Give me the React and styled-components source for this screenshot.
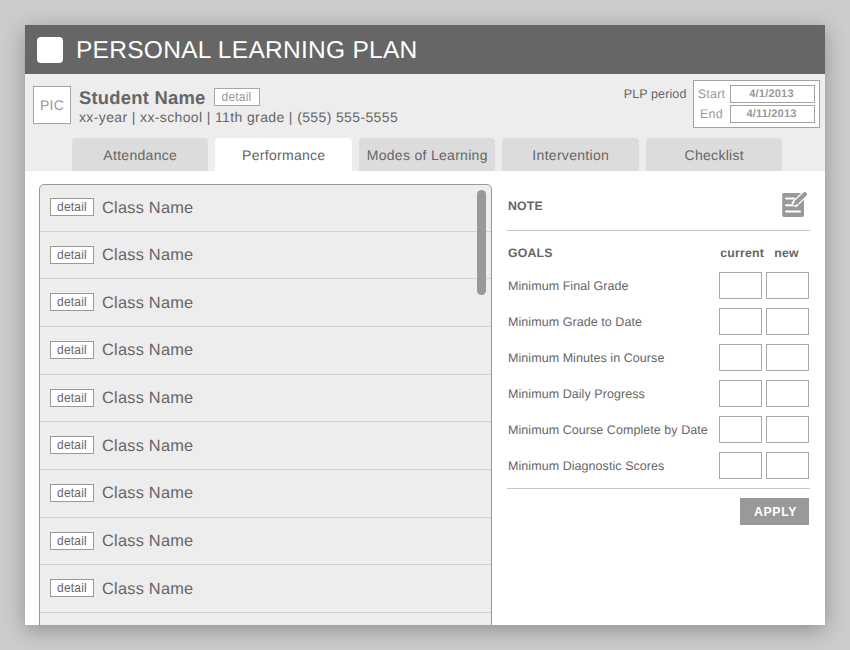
import React from "react";
import styled, { createGlobalStyle } from "styled-components";

const GlobalStyle = createGlobalStyle`
  *, *::before, *::after { box-sizing: border-box; }
  html, body { margin: 0; padding: 0; }
  body {
    background: #cccccc;
    font-family: "Liberation Sans", Arial, sans-serif;
    color: #666;
    overflow: hidden;
    text-rendering: geometricPrecision;
  }
`;

const Page = styled.div`
  width: 850px;
  height: 650px;
  padding: 25px;
  overflow: hidden;
`;

const Window = styled.div`
  width: 800px;
  height: 600px;
  display: flex;
  flex-direction: column;
  background: #fff;
  box-shadow: 0 5px 20px rgba(0, 0, 0, 0.3);
`;

const TitleBar = styled.header`
  height: 49px;
  flex: none;
  display: flex;
  align-items: center;
  gap: 13px;
  padding-left: 12px;
  background: #666;
`;

const Logo = styled.div`
  width: 26px;
  height: 26px;
  border-radius: 4px;
  background: #fff;
`;

const Title = styled.h1`
  margin: 2px 0 0;
  font-size: 24.5px;
  font-weight: 400;
  line-height: 28px;
  letter-spacing: 0.28px;
  color: #fff;
  white-space: nowrap;
`;

const SubHeader = styled.section`
  height: 97px;
  flex: none;
  display: flex;
  flex-direction: column;
  justify-content: space-between;
  background: #ededed;
`;

const Profile = styled.div`
  display: flex;
  align-items: flex-start;
  padding: 6px 5px 0 8px;
`;

const Picture = styled.div`
  width: 38px;
  height: 38px;
  margin-top: 6px;
  display: flex;
  align-items: center;
  justify-content: center;
  border: 1px solid #a3a3a3;
  background: #fff;
  font-size: 14px;
  letter-spacing: 0.2px;
  color: #999;
`;

const Student = styled.div`
  margin: 7px 0 0 8px;
  flex: 1;
`;

const NameLine = styled.div`
  display: flex;
  align-items: center;
  gap: 8px;
  height: 20px;
`;

const StudentName = styled.h2`
  margin: 1px 0 0;
  font-size: 18.4px;
  line-height: 20px;
  letter-spacing: 0.24px;
`;

const StudentInfo = styled.div`
  font-size: 14px;
  line-height: 20px;
  letter-spacing: 0.37px;
  white-space: nowrap;
`;

const DetailButton = styled.button`
  width: ${(p) => (p.$muted ? 46 : 44)}px;
  height: 18px;
  padding: 0;
  flex: none;
  border: 1px solid ${(p) => (p.$muted ? "#a8a8a8" : "#999")};
  background: #fff;
  font: 12px/16px "Liberation Sans", Arial, sans-serif;
  letter-spacing: 0.2px;
  color: ${(p) => (p.$muted ? "#999" : "#666")};
`;

const PeriodLabel = styled.div`
  margin: 6px 6.5px 0 0;
  font-size: 12.5px;
  line-height: 16px;
  letter-spacing: 0.12px;
`;

const Period = styled.div`
  width: 127px;
  height: 48px;
  display: grid;
  grid-template-columns: 29px 85px;
  grid-auto-rows: 18px;
  column-gap: 4px;
  row-gap: 2px;
  padding: 4px 0 0 3px;
  border: 1px solid #a3a3a3;
  background: #fff;
`;

const PeriodName = styled.div`
  font-size: 12.5px;
  line-height: 18px;
  letter-spacing: 0.2px;
  text-align: center;
  color: #999;
`;

const DateField = styled.div`
  padding-right: 2px;
  border: 1px solid #a3a3a3;
  font-size: 11px;
  font-weight: 700;
  line-height: 17px;
  letter-spacing: 0.2px;
  text-align: center;
  color: #999;
`;

const Tabs = styled.nav`
  display: flex;
  gap: 7px;
  padding-left: 46.5px;
`;

const Tab = styled.div`
  width: 136.5px;
  height: 33px;
  padding-left: 1px;
  border-radius: 4px 4px 0 0;
  background: ${(p) => (p.$active ? "#fff" : "#dcdcdc")};
  font-size: 14px;
  line-height: 35px;
  letter-spacing: 0.3px;
  text-align: center;
  white-space: nowrap;
`;

const Content = styled.main`
  flex: 1;
  min-height: 0;
  display: flex;
  align-items: flex-start;
  padding: 13px 15px 0 14px;
  overflow: hidden;
`;

const ClassList = styled.div`
  position: relative;
  width: 453px;
  flex: none;
  height: 460px;
  border: 1px solid #999;
  border-radius: 5px;
  background: #ededed;
  overflow: hidden;
`;

const ClassRow = styled.div`
  height: ${143 / 3}px;
  display: flex;
  align-items: center;
  gap: 8px;
  padding: 0 0 0.8px 10px;
  border-bottom: 1px solid #d2d2d2;

  &:first-child {
    height: ${140 / 3}px;
  }
`;

const ClassName = styled.span`
  font-size: 16.4px;
  line-height: 20px;
  padding-top: 1px;
  letter-spacing: 0.22px;
`;

const ScrollThumb = styled.div`
  position: absolute;
  top: 5px;
  right: 5px;
  width: 9px;
  height: 105px;
  border-radius: 4.5px;
  background: #999;
`;

const Side = styled.aside`
  width: 303px;
  margin-left: 15px;
`;

const NoteRow = styled.div`
  height: 47px;
  display: flex;
  justify-content: space-between;
  padding: 7px 3px 0 1px;
  border-bottom: 1px solid #c4c4c4;
`;

const Heading = styled.h3`
  margin: 0;
  font-size: 12.3px;
  line-height: 16px;
  letter-spacing: 0.2px;
`;

const NoteHeading = styled(Heading)`
  padding-top: 7px;
`;

const NoteIcon = styled.svg`
  width: 26px;
  height: 27px;
  display: block;
`;

const GoalGrid = styled.div`
  display: grid;
  grid-template-columns: 207px 43px 43px;
  column-gap: 4px;
  grid-template-rows: 32px;
  grid-auto-rows: 27px;
  row-gap: 9px;
  padding: 0 0 9px 1px;
  border-bottom: 1px solid #c4c4c4;
`;

const GoalHeading = styled(Heading)`
  padding-top: 14px;
`;

const ColumnName = styled.div`
  padding-top: 14px;
  margin-left: ${(p) => p.$shift}px;
  font-size: 12.3px;
  font-weight: 700;
  line-height: 16px;
  letter-spacing: 0.18px;
  white-space: nowrap;
`;

const GoalLabel = styled.div`
  padding-top: 1px;
  font-size: 12.5px;
  line-height: 27px;
  letter-spacing: 0.06px;
  white-space: nowrap;
`;

const GoalInput = styled.div`
  border: 1px solid #a8a8a8;
  background: #fff;
`;

const Actions = styled.div`
  display: flex;
  justify-content: flex-end;
  padding: 9px 1px 0 0;
`;

const ApplyButton = styled.button`
  width: 69px;
  height: 27px;
  padding: 1px 0 0 2px;
  border: 0;
  background: #999;
  color: #fff;
  font: 700 12.3px/26px "Liberation Sans", Arial, sans-serif;
  letter-spacing: 0.6px;
`;

const tabs = ["Attendance", "Performance", "Modes of Learning", "Intervention", "Checklist"];
const classes = Array.from({ length: 9 }, (_, i) => i);
const goals = [
  "Minimum Final Grade",
  "Minimum Grade to Date",
  "Minimum Minutes in Course",
  "Minimum Daily Progress",
  "Minimum Course Complete by Date",
  "Minimum Diagnostic Scores",
];

export default function App() {
  return (
    <Page>
      <GlobalStyle />
      <Window>
        <TitleBar>
          <Logo />
          <Title>PERSONAL LEARNING PLAN</Title>
        </TitleBar>
        <SubHeader>
          <Profile>
            <Picture>PIC</Picture>
            <Student>
              <NameLine>
                <StudentName>Student Name</StudentName>
                <DetailButton $muted>detail</DetailButton>
              </NameLine>
              <StudentInfo>xx-year | xx-school | 11th grade | (555) 555-5555</StudentInfo>
            </Student>
            <PeriodLabel>PLP period</PeriodLabel>
            <Period>
              <PeriodName>Start</PeriodName>
              <DateField>4/1/2013</DateField>
              <PeriodName>End</PeriodName>
              <DateField>4/11/2013</DateField>
            </Period>
          </Profile>
          <Tabs>
            {tabs.map((t) => (
              <Tab key={t} $active={t === "Performance"}>{t}</Tab>
            ))}
          </Tabs>
        </SubHeader>
        <Content>
          <ClassList>
            {classes.map((c) => (
              <ClassRow key={c}>
                <DetailButton>detail</DetailButton>
                <ClassName>Class Name</ClassName>
              </ClassRow>
            ))}
            <ScrollThumb />
          </ClassList>
          <Side>
            <NoteRow>
              <NoteHeading>NOTE</NoteHeading>
              <NoteIcon viewBox="0 0 26 27" fill="none" strokeLinecap="round">
                <rect x="1.2" y="2" width="21.8" height="24" rx="1.4" fill="#999" />
                <path d="M5 7.6H13M5 14.2H16M5 20.4H19" stroke="#fff" strokeWidth="2" />
                <path d="M15 11.6L24.4 2.6" stroke="#fff" strokeWidth="6.8" strokeLinecap="square" />
                <path d="M16.2 10.6L23.8 3.2" stroke="#999" strokeWidth="4.2" />
                <path d="M14 9.2L18 13L12 14.4Z" fill="#999" />
              </NoteIcon>
            </NoteRow>
            <GoalGrid>
              <GoalHeading>GOALS</GoalHeading>
              <ColumnName $shift={1.3}>current</ColumnName>
              <ColumnName $shift={8.3}>new</ColumnName>
              {goals.map((g) => (
                <React.Fragment key={g}>
                  <GoalLabel>{g}</GoalLabel>
                  <GoalInput />
                  <GoalInput />
                </React.Fragment>
              ))}
            </GoalGrid>
            <Actions>
              <ApplyButton>APPLY</ApplyButton>
            </Actions>
          </Side>
        </Content>
      </Window>
    </Page>
  );
}
